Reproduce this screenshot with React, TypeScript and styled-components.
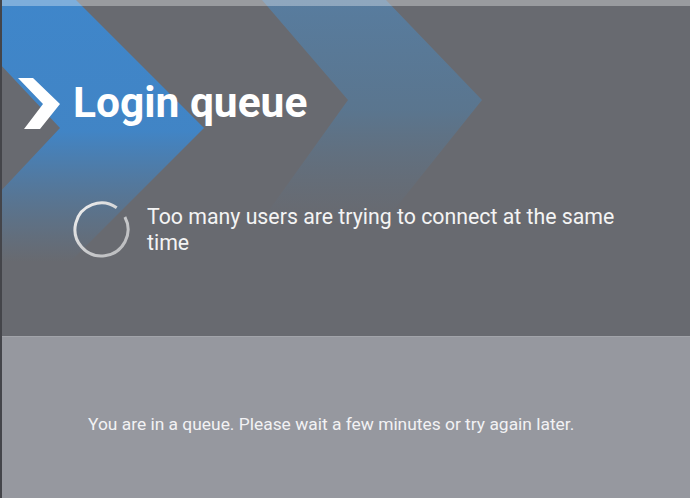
import React from "react";
import styled, { createGlobalStyle } from "styled-components";

const Global = createGlobalStyle`
  html, body { margin: 0; padding: 0; background: #96989f; }
  body { font-family: Roboto, "Noto Sans", "Liberation Sans", sans-serif; }
  * { box-sizing: border-box; }
`;

const Page = styled.div`
  width: 690px;
  height: 100vh;
  min-height: 498px;
  display: flex;
  flex-direction: column;
  border-left: 2px solid rgba(40, 41, 46, 0.75);
  overflow: hidden;
`;

const Hero = styled.section`
  position: relative;
  height: 336px;
  flex: none;
  background: #686a70;
  overflow: hidden;
  display: flex;
  flex-direction: column;
`;

const Backdrop = styled.svg`
  position: absolute;
  left: -2px;
  top: 0;
  width: 690px;
  height: 336px;
  pointer-events: none;
`;

const TopStrip = styled.div`
  position: relative;
  height: 6px;
  background: rgba(255, 255, 255, 0.33);
  flex: none;
`;

const TitleRow = styled.div`
  position: relative;
  display: flex;
  align-items: flex-start;
  gap: 12px;
  margin-top: 71px;
  padding-left: 15px;
`;

const Title = styled.h1`
  margin: 5px 0 0;
  font-family: Roboto, "Noto Sans", sans-serif;
  font-weight: 700;
  font-size: 42.5px;
  line-height: 42px;
  color: #ffffff;
  letter-spacing: 0;
`;

const StatusRow = styled.div`
  position: relative;
  display: flex;
  align-items: flex-start;
  gap: 15px;
  margin-top: 70px;
  padding-left: 70px;
`;

const StatusText = styled.p`
  margin: 4px 0 0;
  width: 500px;
  font-size: 21.3px;
  line-height: 26px;
  color: #f4f4f4;
`;

const Footer = styled.section`
  flex: 1;
  background: #96989f;
  border-top: 1px solid #a2a4aa;
  padding: 77px 0 0 86px;
`;

const FooterText = styled.p`
  margin: 0;
  font-size: 17.4px;
  line-height: 20px;
  color: #f2f2f4;
`;

const Chevron = () => (
  <svg width="44" height="53" viewBox="0 0 44 53" style={{ flex: "none" }}>
    <polygon points="1,1 16,1 43,27 23,52 7,52 26,27" fill="#ffffff" />
  </svg>
);

const Spinner = () => (
  <svg width="60" height="60" viewBox="0 0 60 60" style={{ flex: "none" }}>
    <defs>
      <linearGradient id="spin" x1="0" y1="0" x2="1" y2="1">
        <stop offset="0" stopColor="#f2f2f2" />
        <stop offset="0.6" stopColor="#c9cacc" />
        <stop offset="1" stopColor="#b8b9bc" />
      </linearGradient>
    </defs>
    <path
      d={(() => {
        const cx = 29.5, cy = 29.5, r = 26.5;
        const a0 = (62 * Math.PI) / 180;
        const a1 = (395 * Math.PI) / 180;
        const x0 = cx + r * Math.sin(a0), y0 = cy - r * Math.cos(a0);
        const x1 = cx + r * Math.sin(a1), y1 = cy - r * Math.cos(a1);
        return `M ${x0} ${y0} A ${r} ${r} 0 1 1 ${x1} ${y1}`;
      })()}
      fill="none"
      stroke="url(#spin)"
      strokeWidth="3"
      strokeLinecap="butt"
    />
  </svg>
);

export default function App() {
  return (
    <>
      <Global />
      <Page>
        <Hero>
          <Backdrop viewBox="0 0 690 336">
            <defs>
              <linearGradient id="blueA" x1="0" y1="0" x2="0" y2="1">
                <stop offset="0" stopColor="#3f86ca" stopOpacity="1" />
                <stop offset="0.5" stopColor="#3f86ca" stopOpacity="0.95" />
                <stop offset="1" stopColor="#4a7fb0" stopOpacity="0" />
              </linearGradient>
              <linearGradient id="blueB" x1="0" y1="0" x2="0" y2="1">
                <stop offset="0" stopColor="#4f86b8" stopOpacity="0.65" />
                <stop offset="0.5" stopColor="#4f7fa8" stopOpacity="0.55" />
                <stop offset="1" stopColor="#5a7690" stopOpacity="0" />
              </linearGradient>
            </defs>
            <polygon points="-60,0 76,0 204,128 70,262 -66,262 60,128" fill="url(#blueA)" />
            <polygon points="262,0 386,0 482,100 386,220 262,220 348,100" fill="url(#blueB)" />
          </Backdrop>
          <TopStrip />
          <TitleRow>
            <Chevron />
            <Title>Login queue</Title>
          </TitleRow>
          <StatusRow>
            <Spinner />
            <StatusText>Too many users are trying to connect at the same time</StatusText>
          </StatusRow>
        </Hero>
        <Footer>
          <FooterText>You are in a queue. Please wait a few minutes or try again later.</FooterText>
        </Footer>
      </Page>
    </>
  );
}
